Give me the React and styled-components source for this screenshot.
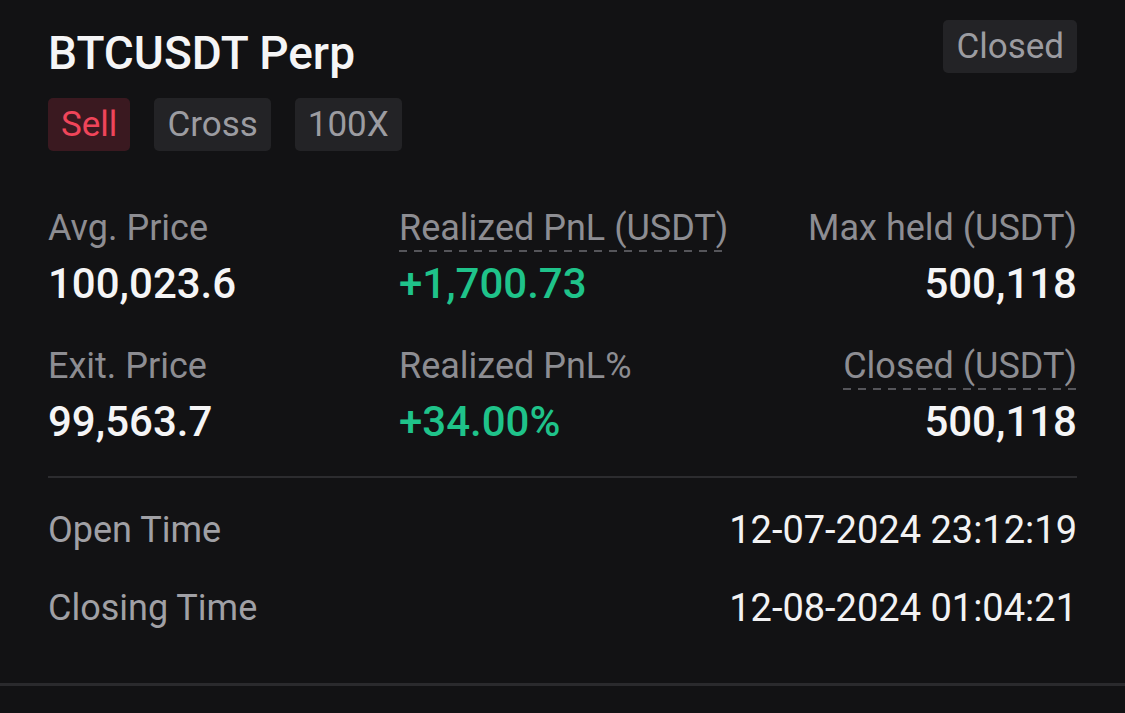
import React from 'react';
import styled, { createGlobalStyle } from 'styled-components';

const GlobalStyle = createGlobalStyle`
    html, body {
        margin: 0;
        padding: 0;
        background: #121214;
    }
    body {
        font-family: Roboto, "Noto Sans", Arial, sans-serif;
        -webkit-font-smoothing: antialiased;
    }
`;

const stats = [
    [
        { label: 'Avg. Price', value: '100,023.6' },
        { label: 'Realized PnL (USDT)', value: '+1,700.73', dashed: true, tone: 'up' },
        { label: 'Max held (USDT)', value: '500,118', align: 'right' }
    ],
    [
        { label: 'Exit. Price', value: '99,563.7' },
        { label: 'Realized PnL%', value: '+34.00%', tone: 'up' },
        { label: 'Closed (USDT)', value: '500,118', dashed: true, align: 'right' }
    ]
];

const times = [
    { label: 'Open Time', value: '12-07-2024 23:12:19' },
    { label: 'Closing Time', value: '12-08-2024 01:04:21' }
];

function App() {
    return (
        <>
            <GlobalStyle />
            <Card>
                <Header>
                    <div>
                        <Title>BTCUSDT Perp</Title>
                        <Tags>
                            <Tag $variant="sell">Sell</Tag>
                            <Tag>Cross</Tag>
                            <Tag>100X</Tag>
                        </Tags>
                    </div>
                    <Tag>Closed</Tag>
                </Header>

                <Grid>
                    {stats.flat().map((s) => (
                        <Stat key={s.label} $align={s.align}>
                            <Label $dashed={s.dashed}>{s.label}</Label>
                            <Value $tone={s.tone}>{s.value}</Value>
                        </Stat>
                    ))}
                </Grid>

                <Divider />

                <Times>
                    {times.map((t) => (
                        <TimeRow key={t.label}>
                            <TimeLabel>{t.label}</TimeLabel>
                            <TimeValue>{t.value}</TimeValue>
                        </TimeRow>
                    ))}
                </Times>
            </Card>
            <BottomRule />
        </>
    );
}

const Card = styled.div`
    padding: 20px 48px 0;
    color: #f2f2f3;
`;

const Header = styled.div`
    display: flex;
    justify-content: space-between;
    align-items: flex-start;
`;

const Title = styled.h1`
    margin: 0;
    font-size: 46px;
    font-weight: 500;
    line-height: 66px;
    color: #f5f5f6;
`;

const Tags = styled.div`
    display: flex;
    gap: 24px;
    margin-top: 12px;
`;

const Tag = styled.span`
    display: inline-flex;
    align-items: center;
    height: 53px;
    padding: 0 13px;
    border-radius: 5px;
    font-size: 35px;
    background: ${(p) => (p.$variant === 'sell' ? '#3a1920' : '#232326')};
    color: ${(p) => (p.$variant === 'sell' ? '#f0455a' : '#9c9ca1')};
`;

const Grid = styled.div`
    display: grid;
    grid-template-columns: 351px 1fr 1fr;
    row-gap: 38px;
    margin-top: 57px;
`;

const Stat = styled.div`
    display: flex;
    flex-direction: column;
    align-items: ${(p) => (p.$align === 'right' ? 'flex-end' : 'flex-start')};
`;

const Label = styled.span`
    font-size: 36px;
    line-height: 40px;
    color: #8d8d92;
    padding-bottom: 4px;
    background-image: ${(p) =>
        p.$dashed
            ? 'repeating-linear-gradient(90deg, #55555a 0 8px, transparent 8px 15px)'
            : 'none'};
    background-size: 100% 2px;
    background-position: left bottom;
    background-repeat: no-repeat;
`;

const Value = styled.span`
    margin-top: 8px;
    font-size: 42px;
    font-weight: 500;
    line-height: 48px;
    color: ${(p) => (p.$tone === 'up' ? '#1fc38a' : '#f5f5f6')};
`;

const Divider = styled.div`
    height: 2px;
    background: #2c2c2f;
    margin-top: 30px;
`;

const Times = styled.div`
    display: flex;
    flex-direction: column;
    gap: 32px;
    padding: 29px 0 52px;
`;

const TimeRow = styled.div`
    display: flex;
    justify-content: space-between;
    align-items: center;
    height: 46px;
`;

const TimeLabel = styled.span`
    font-size: 36px;
    color: #a0a0a5;
`;

const TimeValue = styled.span`
    font-size: 38px;
    color: #f2f2f3;
`;

const BottomRule = styled.div`
    height: 3px;
    background: #2a2a2d;
`;

export default App;
